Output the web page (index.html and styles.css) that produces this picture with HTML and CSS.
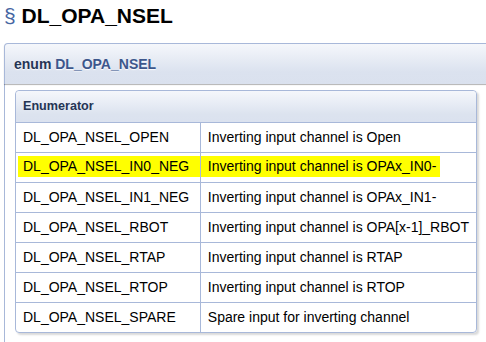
FILE: index.html
```html
<!DOCTYPE html>
<html>
<head>
<meta charset="utf-8">
<link rel="stylesheet" href="styles.css">
</head>
<body>
<div class="page">
  <h2 class="memtitle"><span class="permalink">§</span> DL_OPA_NSEL</h2>
  <div class="memitem">
    <div class="memproto"><span class="kw">enum</span>&nbsp;<a class="el">DL_OPA_NSEL</a></div>
    <div class="memdoc">
      <table class="fieldtable">
        <tr><th colspan="2">Enumerator</th></tr>
        <tr><td class="fieldname">DL_OPA_NSEL_OPEN</td><td class="fielddoc">Inverting input channel is Open</td></tr>
        <tr><td class="fieldname"><span class="hl hl-name">DL_OPA_NSEL_IN0_NEG</span></td><td class="fielddoc"><span class="hl hl-doc">Inverting input channel is OPAx_IN0-</span></td></tr>
        <tr><td class="fieldname">DL_OPA_NSEL_IN1_NEG</td><td class="fielddoc">Inverting input channel is OPAx_IN1-</td></tr>
        <tr><td class="fieldname">DL_OPA_NSEL_RBOT</td><td class="fielddoc">Inverting input channel is OPA[x-1]_RBOT</td></tr>
        <tr><td class="fieldname">DL_OPA_NSEL_RTAP</td><td class="fielddoc">Inverting input channel is RTAP</td></tr>
        <tr><td class="fieldname">DL_OPA_NSEL_RTOP</td><td class="fielddoc">Inverting input channel is RTOP</td></tr>
        <tr class="last"><td class="fieldname">DL_OPA_NSEL_SPARE</td><td class="fielddoc">Spare input for inverting channel</td></tr>
      </table>
    </div>
  </div>
</div>
</body>
</html>
```
FILE: styles.css
```css
html, body {
  margin: 0;
  padding: 0;
  background: #ffffff;
  overflow: hidden;
}

.page {
  box-sizing: border-box;
  height: 342px;
  overflow: hidden;
  padding: 4px 0 0 4px;
  font-family: "Liberation Sans", Arial, sans-serif;
  color: #000000;
}

.memtitle {
  margin: 0;
  font-size: 21px;
  line-height: 24px;
  font-weight: bold;
  color: #000000;
}

.permalink {
  color: #4665a2;
  font-weight: normal;
}

.memitem {
  margin-top: 15px;
  margin-right: -30px;
}

.memproto {
  height: 40px;
  display: flex;
  align-items: center;
  padding-left: 9px;
  border: 1px solid #a8b8d9;
  border-bottom: none;
  border-top-left-radius: 4px;
  background: linear-gradient(to bottom, #f5f7fb 0%, #e6ebf4 40%, #dbe2ef 70%, #dae1ee 100%);
  box-shadow: 0 1px 1px rgba(0, 0, 0, 0.3);
  font-size: 14px;
  font-weight: bold;
  color: #253555;
  text-shadow: 0 1px 1px rgba(255, 255, 255, 0.9);
  position: relative;
}

.memproto .el {
  color: #3d578c;
  text-decoration: none;
}

.memdoc {
  border-left: 1px solid #a8b8d9;
  padding: 6px 0 30px 10px;
}

.fieldtable {
  border-collapse: separate;
  border-spacing: 0;
  border: 1px solid #a8b8d9;
  border-radius: 4px;
  box-shadow: 2px 2px 2px rgba(0, 0, 0, 0.15);
  width: 462px;
  font-size: 14px;
}

.fieldtable th {
  text-align: left;
  font-size: 12.6px;
  font-weight: bold;
  color: #253555;
  line-height: 22px;
  padding: 4px 7px 5px;
  border-bottom: 1px solid #a8b8d9;
  border-radius: 4px 4px 0 0;
  background: linear-gradient(to bottom, #f5f7fb 0%, #e6ebf4 45%, #dce3ef 75%, #dbe2ef 100%);
}

.fieldtable td {
  padding: 4px 7px;
  line-height: 21px;
  white-space: nowrap;
  border-bottom: 1px solid #a8b8d9;
  vertical-align: top;
}

.fieldtable tr.last td {
  border-bottom: none;
}

.fieldtable td.fieldname {
  width: 170px;
  border-right: 1px solid #a8b8d9;
}

.hl {
  background: #ffff00;
}

.hl-name {
  display: block;
  margin: -1px -7px 1px -5px;
  padding: 0 7px 0 5px;
}

.hl-doc {
  display: inline-block;
  vertical-align: top;
  margin: -1px 0 0 -7px;
  padding: 0 4px 0 7px;
}
```
